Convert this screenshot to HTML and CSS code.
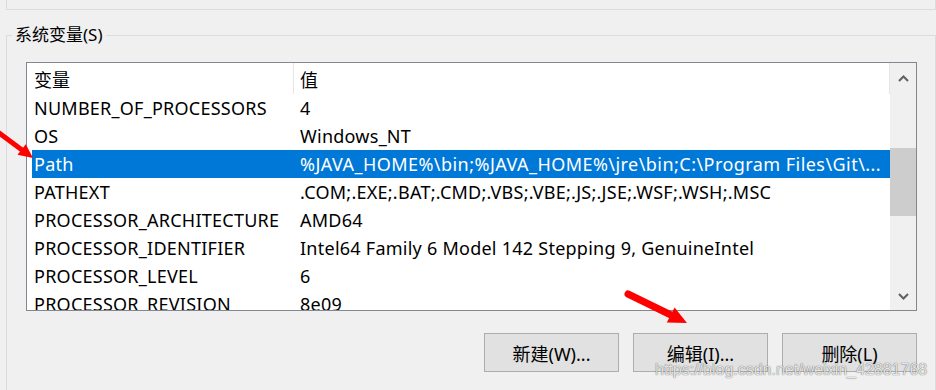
FILE: index.html
```html
<!DOCTYPE html>
<html lang="zh-CN">
<head>
<meta charset="utf-8">
<title>系统变量</title>
<link rel="stylesheet" href="styles.css">
</head>
<body>
<div class="window">
  <div class="top-group"></div>
  <div class="group">
    <div class="legend">系统变量(S)</div>
    <div class="listbox">
      <div class="list">
        <div class="header">
          <div class="hcell h1">变量</div>
          <div class="hcell h2">值</div>
        </div>
        <div class="row"><span class="c1">NUMBER_OF_PROCESSORS</span><span class="c2">4</span></div>
        <div class="row"><span class="c1">OS</span><span class="c2">Windows_NT</span></div>
        <div class="row selected"><span class="c1">Path</span><span class="c2 wide">%JAVA_HOME%\bin;%JAVA_HOME%\jre\bin;C:\Program Files\Git\...</span></div>
        <div class="row"><span class="c1">PATHEXT</span><span class="c2">.COM;.EXE;.BAT;.CMD;.VBS;.VBE;.JS;.JSE;.WSF;.WSH;.MSC</span></div>
        <div class="row"><span class="c1">PROCESSOR_ARCHITECTURE</span><span class="c2">AMD64</span></div>
        <div class="row"><span class="c1">PROCESSOR_IDENTIFIER</span><span class="c2">Intel64 Family 6 Model 142 Stepping 9, GenuineIntel</span></div>
        <div class="row"><span class="c1">PROCESSOR_LEVEL</span><span class="c2">6</span></div>
        <div class="row"><span class="c1">PROCESSOR_REVISION</span><span class="c2">8e09</span></div>
      </div>
      <div class="scrollbar">
        <div class="sb-btn sb-up">
          <svg width="11" height="7" viewBox="0 0 11 7"><path d="M1 6 L5.5 1.5 L10 6" fill="none" stroke="#606060" stroke-width="2"/></svg>
        </div>
        <div class="sb-gap"></div>
        <div class="sb-thumb"></div>
        <div class="sb-rest"></div>
        <div class="sb-btn sb-down">
          <svg width="11" height="7" viewBox="0 0 11 7"><path d="M1 1 L5.5 5.5 L10 1" fill="none" stroke="#606060" stroke-width="2"/></svg>
        </div>
      </div>
    </div>
    <div class="buttons">
      <div class="btn">新建(W)...</div>
      <div class="btn">编辑(I)...</div>
      <div class="btn">删除(L)</div>
    </div>
  </div>
  <svg class="arrows" width="936" height="390" viewBox="0 0 936 390">
    <line x1="-6" y1="129" x2="22" y2="150" stroke="#ff0000" stroke-width="5"/>
    <polygon points="33,158 17.5,154.8 25.8,144.3" fill="#ff0000"/>
    <line x1="628" y1="294" x2="672" y2="315.5" stroke="#ff0000" stroke-width="7" stroke-linecap="round"/>
    <polygon points="687,323 666.8,322.6 674.6,307.4" fill="#ff0000"/>
  </svg>
  <div class="watermark">https://blog.csdn.net/weixin_42881768</div>
</div>
</body>
</html>
```
FILE: styles.css
```css
* { box-sizing: border-box; }
html, body { margin: 0; padding: 0; }
body {
  background: #f0f0f0;
  font-family: "Noto Sans", "Noto Sans CJK SC", sans-serif;
  color: #000;
}
.window {
  position: relative;
  width: 936px;
  height: 390px;
  overflow: hidden;
  display: flex;
  flex-direction: column;
}
.top-group {
  margin-left: 6px;
  width: 930px;
  height: 10px;
  border: 1px solid #dcdcdc;
  border-top: none;
}
.group {
  flex: 1;
  margin-top: 25px;
  margin-left: 6px;
  width: 930px;
  border: 1px solid #dcdcdc;
  border-bottom: none;
  padding: 0 18px 0 19px;
}
.legend {
  width: fit-content;
  margin: -13px 0 0 -14px;
  padding: 0 3px;
  background: #f0f0f0;
  font-size: 17px;
  line-height: 24px;
}
.listbox {
  margin-top: 15px;
  height: 249px;
  border: 1px solid #828790;
  background: #fff;
  display: flex;
}
.list {
  width: 863px;
  overflow: hidden;
  font-size: 18px;
}
.header {
  display: flex;
  height: 31px;
}
.hcell {
  display: flex;
  align-items: center;
  height: 31px;
  border-right: 1px solid #e5e5e5;
}
.h1 { width: 267px; padding-left: 7px; }
.h2 { flex: 1; padding-left: 6px; }
.row {
  display: flex;
  align-items: center;
  height: 28px;
  margin-left: 5px;
  white-space: nowrap;
  letter-spacing: 0.25px;
}
.row .c1 { width: 266px; padding-left: 2px; }
.row .c2 { flex: 1; padding-left: 2px; overflow: hidden; }
.row .c2.wide { letter-spacing: 0.45px; }
.row.selected { background: #0078d7; color: #fff; }
.scrollbar {
  width: 26px;
  background: #f0f0f0;
  display: flex;
  flex-direction: column;
}
.sb-btn {
  display: flex;
  align-items: center;
  justify-content: center;
}
.sb-up { height: 31px; }
.sb-down { height: 28px; }
.sb-gap { height: 54px; }
.sb-thumb { height: 68px; background: #cdcdcd; }
.sb-rest { flex: 1; }
.buttons {
  margin-top: 22px;
  display: flex;
  justify-content: flex-end;
  gap: 14px;
}
.btn {
  width: 135px;
  height: 39px;
  background: #e1e1e1;
  border: 1px solid #adadad;
  display: flex;
  align-items: center;
  justify-content: center;
  font-size: 18px;
}
.arrows {
  position: absolute;
  left: 0;
  top: 0;
  pointer-events: none;
}
.watermark {
  position: absolute;
  left: 655px;
  top: 361px;
  font-family: "Liberation Sans", Arial, sans-serif;
  font-size: 16px;
  line-height: 18px;
  color: rgba(255, 255, 255, 0.85);
  text-shadow: 0 0 1px rgba(0, 0, 0, 0.55), 0 0 1px rgba(0, 0, 0, 0.3);
  white-space: nowrap;
}
```
